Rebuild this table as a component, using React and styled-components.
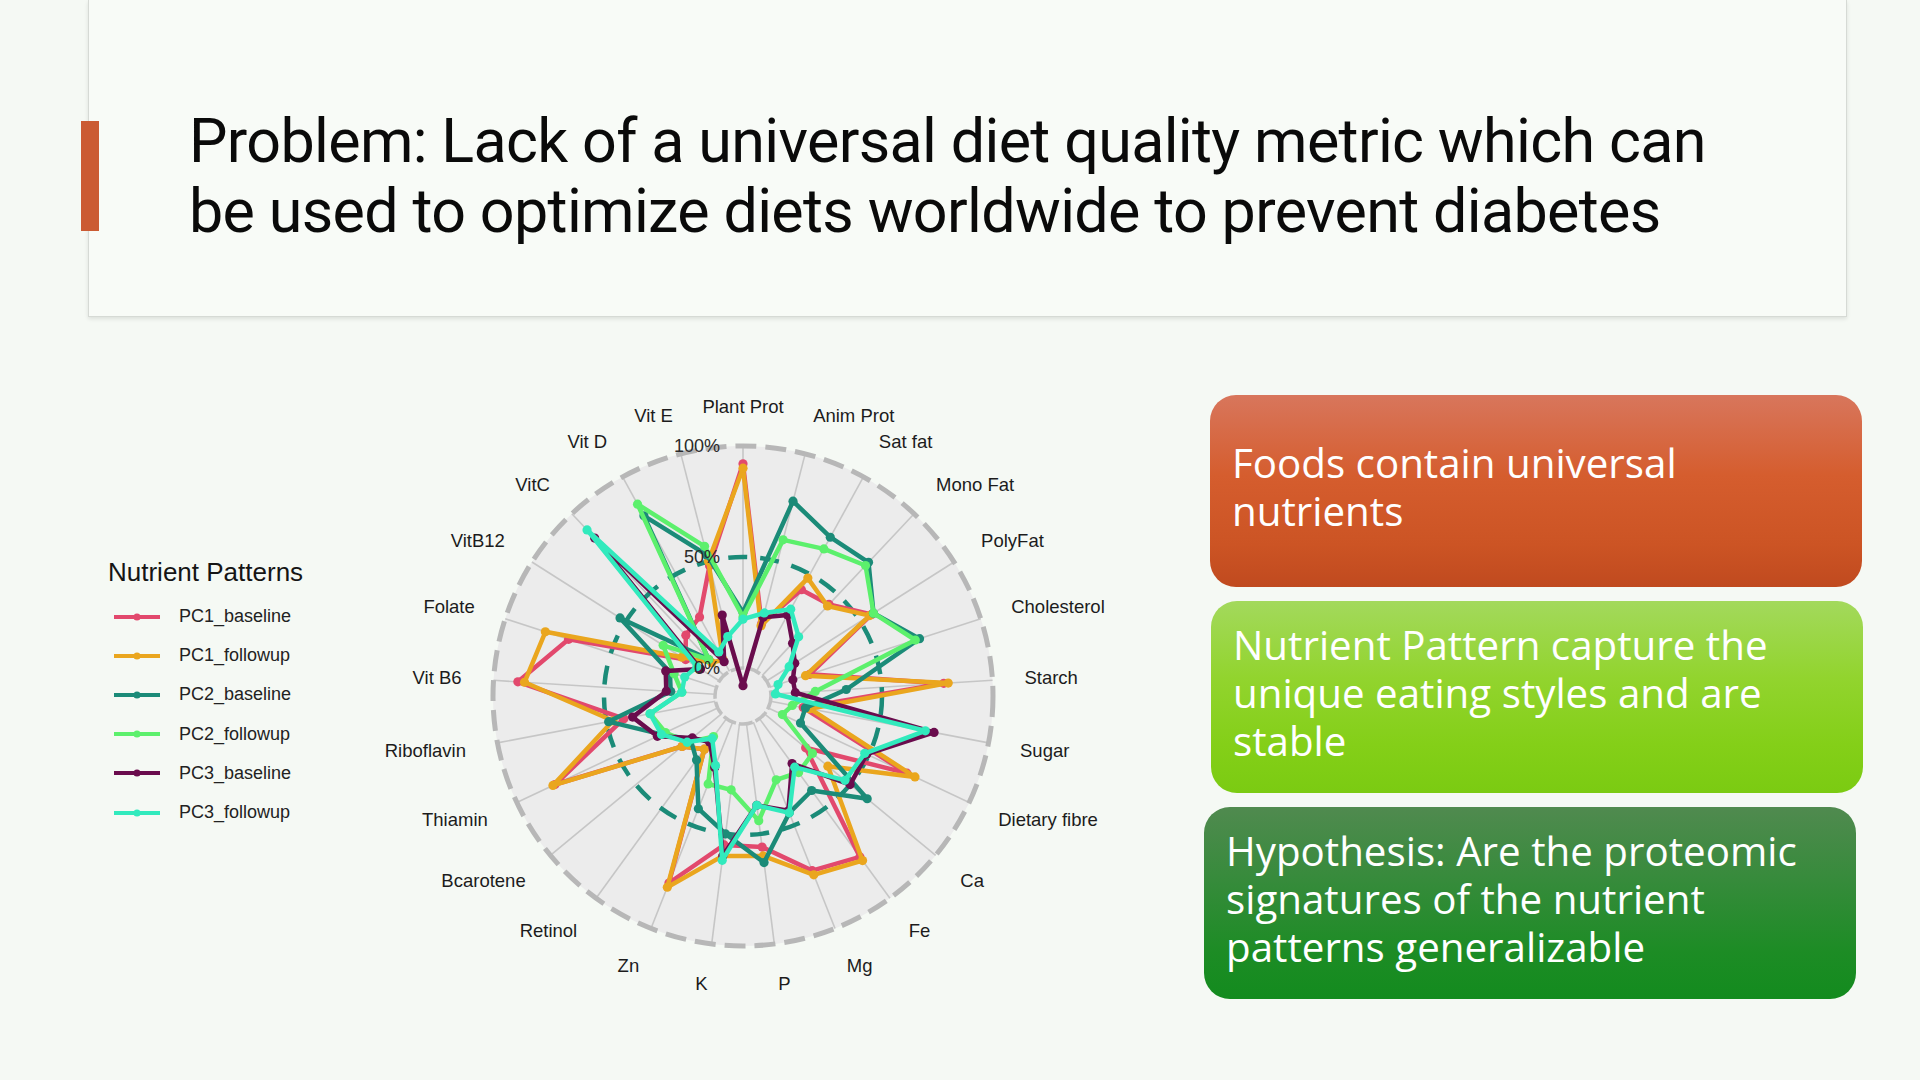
import React from "react";
import styled, { createGlobalStyle } from "styled-components";

const GlobalStyle = createGlobalStyle`
  html, body {
    margin: 0;
    padding: 0;
    background: #f5f9f4;
  }
  body {
    width: 1920px;
    height: 1080px;
    overflow: hidden;
    font-family: "Liberation Sans", Arial, sans-serif;
  }
`;

const AXES = [
  "Plant Prot", "Anim Prot", "Sat fat", "Mono Fat", "PolyFat", "Cholesterol",
  "Starch", "Sugar", "Dietary fibre", "Ca", "Fe", "Mg", "P", "K", "Zn",
  "Retinol", "Bcarotene", "Thiamin", "Riboflavin", "Vit B6", "Folate",
  "VitB12", "VitC", "Vit D", "Vit E",
];

// value per axis, 0 = inner ring, 1 = outer ring
const SERIES = [
  {
    name: "PC1_baseline",
    color: "#e2496d",
    values: [.92, .21, .42, .44, .56, .19, .78, .15, .69, .24, .77, .72, .56, .55, .78, .17, .23, .81, .42, .89, .70, .18, .25, .28, .48],
  },
  {
    name: "PC1_followup",
    color: "#eaa61e",
    values: [.90, .20, .48, .43, .55, .17, .80, .18, .73, .37, .79, .74, .60, .60, .80, .17, .23, .82, .47, .86, .81, .20, .08, .06, .50],
  },
  {
    name: "PC2_baseline",
    color: "#1b8b78",
    values: [.25, .78, .69, .70, .57, .71, .34, .16, .16, .60, .40, .44, .63, .50, .42, .23, .18, .28, .49, .20, .22, .53, .10, .80, .53],
  },
  {
    name: "PC2_followup",
    color: "#5cf06c",
    values: [.23, .60, .63, .68, .57, .69, .20, .10, .07, .28, .30, .28, .44, .30, .30, .10, .20, .26, .30, .15, .20, .30, .10, .86, .57],
  },
  {
    name: "PC3_baseline",
    color: "#6a0c4d",
    values: [-.08, .24, .29, .20, .15, .11, .11, .75, .49, .50, .25, .43, .37, .60, .22, .13, .17, .30, .38, .22, .24, .10, .85, .05, .25],
  },
  {
    name: "PC3_followup",
    color: "#31eabd",
    values: [.22, .26, .32, .24, .12, .04, .02, .71, .48, .47, .27, .44, .37, .62, .21, .11, .20, .28, .30, .15, .15, .12, .90, .10, .15],
  },
];

const CX = 373;
const CY = 316;
const R0 = 28;
const R100 = 250;

const angleOf = (i) => (i * 2 * Math.PI) / AXES.length;
const polar = (i, r) => [CX + r * Math.sin(angleOf(i)), CY - r * Math.cos(angleOf(i))];
const radiusOf = (v) => R0 + v * (R100 - R0);

const Slide = styled.div`
  width: 1920px;
  height: 1080px;
  display: flex;
  flex-direction: column;
`;

const HeaderCard = styled.header`
  position: relative;
  box-sizing: border-box;
  margin-left: 88px;
  width: 1759px;
  height: 317px;
  padding: 35px 0 0 100px;
  display: flex;
  align-items: center;
  background: #f8fbf7;
  border: 1px solid #d6dad5;
  border-top: none;
  box-shadow: 0 2px 4px rgba(0, 0, 0, 0.1);
`;

const AccentBar = styled.div`
  position: absolute;
  left: -8px;
  top: 121px;
  width: 18px;
  height: 110px;
  background: #cb5b33;
`;

const Title = styled.h1`
  margin: 0;
  font-family: Roboto, "Liberation Sans", sans-serif;
  font-weight: 400;
  font-size: 61px;
  line-height: 70px;
  letter-spacing: -0.65px;
  color: #0a0a0a;
  white-space: nowrap;
`;

const ContentRow = styled.main`
  display: flex;
  align-items: flex-start;
  padding-left: 108px;
`;

const Legend = styled.div`
  width: 262px;
  margin-top: 240px;
  display: flex;
  flex-direction: column;
`;

const LegendTitle = styled.div`
  font-size: 26px;
  line-height: 30px;
  color: #151515;
`;

const LegendList = styled.ul`
  list-style: none;
  margin: 10px 0 0;
  padding: 0;
`;

const LegendItem = styled.li`
  height: 39.2px;
  display: flex;
  align-items: center;
  gap: 19px;
  padding-left: 6px;
`;

const LegendLabel = styled.span`
  font-size: 18px;
  color: #222;
`;

const RadarSvg = styled.svg`
  flex: none;
  margin-top: 63px;
  width: 760px;
  height: 630px;
  font-family: "Liberation Sans", Arial, sans-serif;
`;

const Callouts = styled.div`
  flex: none;
  margin: 78px 0 0 80px;
  display: flex;
  flex-direction: column;
  gap: 14px;
`;

const TONES = {
  orange: "linear-gradient(180deg, #d8765c 0%, #d55d2e 42%, #cc5424 78%, #c04a1f 100%)",
  lime: "linear-gradient(180deg, #a3d95c 0%, #92d42e 40%, #84cf18 75%, #7bcb12 100%)",
  green: "linear-gradient(180deg, #508a4f 0%, #358b3a 40%, #1d8c25 75%, #138b1e 100%)",
};

const Callout = styled.div`
  box-sizing: border-box;
  width: 652px;
  height: 192px;
  margin-left: ${(p) => p.$shift || 0}px;
  padding: 0 20px 8px 22px;
  display: flex;
  flex-direction: column;
  justify-content: center;
  border-radius: 26px;
  background: ${(p) => TONES[p.$tone]};
`;

const CalloutText = styled.p`
  margin: 0;
  font-family: "Open Sans", "Noto Sans", sans-serif;
  font-size: 40.3px;
  line-height: 48px;
  color: #ffffff;
  white-space: nowrap;
`;

function LegendSwatch({ color }) {
  return (
    <svg width="46" height="10" viewBox="0 0 46 10">
      <line x1="0" y1="5" x2="46" y2="5" stroke={color} strokeWidth="4" />
      <circle cx="23" cy="5" r="3.6" fill={color} />
    </svg>
  );
}

function RadarChart() {
  const axisLabel = (name, i) => {
    const s = Math.sin(angleOf(i));
    const c = Math.cos(angleOf(i));
    const anchor = s > 0.05 ? "start" : s < -0.05 ? "end" : "middle";
    return (
      <text
        key={name}
        x={CX + 282 * s}
        y={CY - 290 * c}
        textAnchor={anchor}
        dominantBaseline="central"
        fontSize="18.5"
        fill="#1c1c1c"
      >
        {name}
      </text>
    );
  };

  return (
    <RadarSvg viewBox="0 0 760 630">
      <circle cx={CX} cy={CY} r={R100} fill="#ececec" />
      {AXES.map((name, i) => {
        const [x1, y1] = polar(i, R0);
        const [x2, y2] = polar(i, R100);
        return <line key={name} x1={x1} y1={y1} x2={x2} y2={y2} stroke="#c6c6c6" strokeWidth="1.6" />;
      })}
      <circle cx={CX} cy={CY} r={R100} fill="none" stroke="#b7b7b7" strokeWidth="5" strokeDasharray="21 9" />
      <circle cx={CX} cy={CY} r={R0} fill="#ececec" stroke="#c0c0c0" strokeWidth="3.5" strokeDasharray="14 3" />
      <circle cx={CX} cy={CY} r={radiusOf(0.5)} fill="none" stroke="#1b8b78" strokeWidth="4.5" strokeDasharray="19 13" />

      {SERIES.map((s) => {
        const pts = s.values.map((v, i) => polar(i, radiusOf(v)));
        const d = pts.map(([x, y], i) => `${i ? "L" : "M"}${x.toFixed(1)} ${y.toFixed(1)}`).join(" ") + " Z";
        return (
          <g key={s.name}>
            <path d={d} fill="none" stroke={s.color} strokeWidth="4.5" strokeLinejoin="round" />
            {pts.map(([x, y], i) => (
              <circle key={i} cx={x} cy={y} r="4.6" fill={s.color} />
            ))}
          </g>
        );
      })}

      <text x="350" y="66" textAnchor="end" dominantBaseline="central" fontSize="18" fill="#2a2a2a">100%</text>
      <text x="350" y="177" textAnchor="end" dominantBaseline="central" fontSize="18" fill="#2a2a2a">50%</text>
      <text x="350" y="288" textAnchor="end" dominantBaseline="central" fontSize="18" fill="#2a2a2a">0%</text>

      {AXES.map(axisLabel)}
    </RadarSvg>
  );
}

export default function App() {
  return (
    <Slide>
      <GlobalStyle />
      <HeaderCard>
        <AccentBar />
        <Title>
          Problem: Lack of a universal diet quality metric which can
          <br />
          be used to optimize diets worldwide to prevent diabetes
        </Title>
      </HeaderCard>

      <ContentRow>
        <Legend>
          <LegendTitle>Nutrient Patterns</LegendTitle>
          <LegendList>
            {SERIES.map((s) => (
              <LegendItem key={s.name}>
                <LegendSwatch color={s.color} />
                <LegendLabel>{s.name}</LegendLabel>
              </LegendItem>
            ))}
          </LegendList>
        </Legend>

        <RadarChart />

        <Callouts>
          <Callout $tone="orange">
            <CalloutText>
              Foods contain universal
              <br />
              nutrients
            </CalloutText>
          </Callout>
          <Callout $tone="lime" $shift={1}>
            <CalloutText>
              Nutrient Pattern capture the
              <br />
              unique eating styles and are
              <br />
              stable
            </CalloutText>
          </Callout>
          <Callout $tone="green" $shift={-6}>
            <CalloutText>
              Hypothesis: Are the proteomic
              <br />
              signatures of the nutrient
              <br />
              patterns generalizable
            </CalloutText>
          </Callout>
        </Callouts>
      </ContentRow>
    </Slide>
  );
}
